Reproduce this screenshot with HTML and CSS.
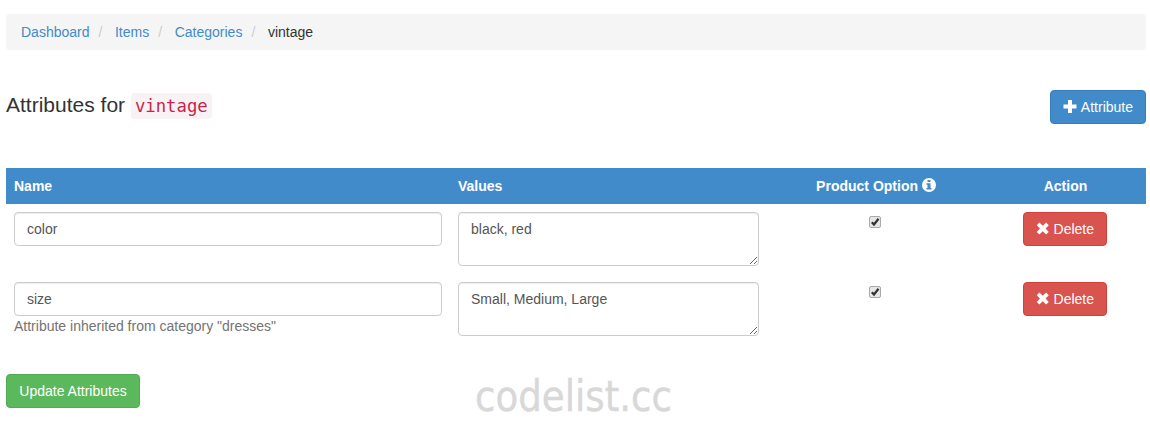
FILE: index.html
```html
<!DOCTYPE html>
<html lang="en">
<head>
<meta charset="utf-8">
<title>Attributes</title>
<link rel="stylesheet" href="styles.css">
</head>
<body>
<ol class="breadcrumb">
  <li><a href="#">Dashboard</a></li>
  <li><a href="#">Items</a></li>
  <li><a href="#">Categories</a></li>
  <li>vintage</li>
</ol>
<header class="heading">
  <h1 class="title">Attributes for <code class="code">vintage</code></h1>
  <button class="btn btn-primary"><svg class="icon" viewBox="0 0 14 14"><path d="M5 0h4v4.500h4.500v4H9V13H5V8.500H0.500v-4H5z"/></svg>Attribute</button>
</header>
<table class="table">
  <thead>
    <tr>
      <th class="col-name">Name</th>
      <th class="col-values">Values</th>
      <th class="col-option">Product Option <svg class="icon icon-info" viewBox="0 0 14 14"><path fill-rule="evenodd" d="M7 0a7 7 0 1 0 0 14A7 7 0 0 0 7 0zM5.500 2h3v2h-3zM4.500 5.200h4v4.800h1v1.600h-5V10h1V6.800h-1z"/></svg></th>
      <th class="col-action">Action</th>
    </tr>
  </thead>
  <tbody>
    <tr>
      <td><input class="control" type="text" value="color"></td>
      <td><textarea class="control area" rows="2">black, red</textarea></td>
      <td class="center"><svg class="check" viewBox="0 0 13 13"><rect class="check-box" x=".5" y=".5" width="11" height="11" rx="1.500"/><path class="check-mark" d="M2.800 6.200l2.200 2.300L9.500 2.800"/></svg></td>
      <td class="center"><button class="btn btn-danger"><svg class="icon" viewBox="0 0 14 14"><path d="M3.500.3L7 3.600 10.500.3l2.700 2.700L9.900 6.500l3.300 3.500-2.700 2.700L7 9.400l-3.500 3.300L.8 10 4.100 6.500.8 3z"/></svg>Delete</button></td>
    </tr>
    <tr>
      <td><input class="control" type="text" value="size"><span class="help">Attribute inherited from category "dresses"</span></td>
      <td><textarea class="control area" rows="2">Small, Medium, Large</textarea></td>
      <td class="center"><svg class="check" viewBox="0 0 13 13"><rect class="check-box" x=".5" y=".5" width="11" height="11" rx="1.500"/><path class="check-mark" d="M2.800 6.200l2.200 2.300L9.500 2.800"/></svg></td>
      <td class="center"><button class="btn btn-danger"><svg class="icon" viewBox="0 0 14 14"><path d="M3.500.3L7 3.600 10.500.3l2.700 2.700L9.900 6.500l3.300 3.500-2.700 2.700L7 9.400l-3.500 3.300L.8 10 4.100 6.500.8 3z"/></svg>Delete</button></td>
    </tr>
  </tbody>
</table>
<footer class="footer">
  <button class="btn btn-success">Update Attributes</button>
  <svg class="watermark" width="210" height="51"><text x="4" y="37" textLength="197" lengthAdjust="spacingAndGlyphs">codelist.cc</text></svg>
</footer>
</body>
</html>
```
FILE: styles.css
```css
* { box-sizing: border-box; }
body {
  margin: 0;
  padding: 14px 4px 0 6px;
  height: 425px;
  overflow: hidden;
  background: #fff;
  color: #333;
  font: 14px/20px "Liberation Sans", Arial, sans-serif;
}
.breadcrumb {
  display: flex;
  height: 36px;
  margin: 0;
  padding: 8px 15px;
  border-radius: 4px;
  background: #f5f5f5;
  list-style: none;
}
.breadcrumb li + li::before {
  content: "/";
  padding: 0 12.6px 0 9px;
  color: #ccc;
}
.breadcrumb a { color: #428bca; text-decoration: none; }
.heading {
  display: flex;
  justify-content: space-between;
  align-items: flex-start;
  margin-top: 40px;
  height: 78px;
}
.title { margin: 2px 0 0; font-size: 21px; line-height: 26px; font-weight: 400; }
.code {
  display: inline-block;
  padding: 0 4px;
  border-radius: 4px;
  background: #f9f2f4;
  color: #c7254e;
  font: 17.3px/26px "DejaVu Sans Mono", monospace;
}
.btn {
  display: inline-flex;
  align-items: center;
  justify-content: center;
  height: 34px;
  padding: 0 12px;
  border: 1px solid;
  border-radius: 4px;
  color: #fff;
  font: 14px/20px "Liberation Sans", Arial, sans-serif;
  white-space: nowrap;
}
.btn-primary { background: #428bca; border-color: #357ebd; }
.btn-danger { width: 84px; margin-left: 1px; background: #d9534f; border-color: #d43f3a; }
.btn-success { width: 134px; background: #5cb85c; border-color: #4cae4c; }
.icon { width: 14px; height: 14px; margin-right: 4px; fill: #fff; }
.icon-info { margin: 0; vertical-align: -1px; }
.table { width: 1140px; border-collapse: collapse; table-layout: fixed; }
.table th { height: 36px; padding: 8px; background: #428bca; color: #fff; text-align: left; }
.table td { height: 70px; padding: 8px; vertical-align: top; }
.col-name { width: 444px; }
.col-values { width: 317px; }
.col-option { width: 216px; }
.col-action { width: 163px; }
.table .col-option, .table .col-action, .center { text-align: center; }
.table .col-option, .table .col-action { padding-left: 9px; padding-right: 7px; }
.control {
  display: block;
  width: 100%;
  height: 34px;
  margin: 0;
  padding: 6px 12px;
  border: 1px solid #ccc;
  border-radius: 4px;
  box-shadow: inset 0 1px 1px rgba(0, 0, 0, .075);
  background: #fff;
  color: #555;
  font: 14px/20px "Liberation Sans", Arial, sans-serif;
}
.area { height: 54px; resize: vertical; overflow: hidden; }
.help { display: block; color: #737373; }
.check { display: block; width: 13px; height: 13px; margin: 4px auto 0; }
.check-box { fill: #e6e6e6; stroke: #aaa; }
.check-mark { fill: none; stroke: #333; stroke-width: 2.2; }
.footer { display: flex; align-items: flex-start; margin-top: 30px; }
.watermark { overflow: visible; margin-left: 331px; fill: #d8d8d8; stroke: #d8d8d8; stroke-width: .4; font: 43px "DejaVu Sans", sans-serif; }
```
